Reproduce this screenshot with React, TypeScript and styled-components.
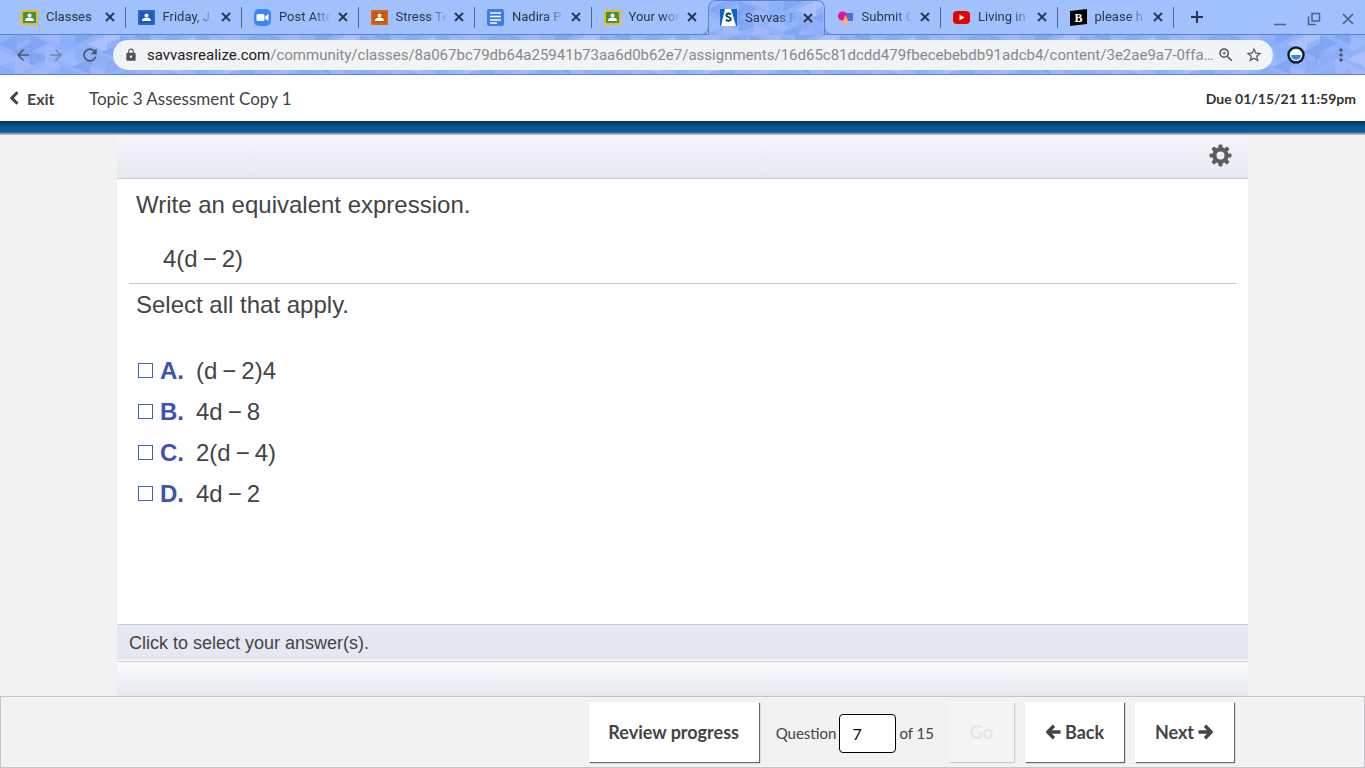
import React, { useState } from "react";
import styled, { createGlobalStyle, css } from "styled-components";
import { MdArrowBack, MdArrowForward, MdRefresh, MdLock, MdOutlineZoomIn, MdStarBorder, MdMoreVert } from "react-icons/md";

const GlobalStyle = createGlobalStyle`
  *, *::before, *::after { box-sizing: border-box; }
  body { margin: 0; background: #f2f2f2; }
  button { font: inherit; color: inherit; border: 0; padding: 0; background: none; }
`;

const Page = styled.div`
  display: flex;
  flex-direction: column;
  min-height: 100vh;
  color: #444;
  font-family: "Liberation Sans", sans-serif;
`;

/* Browser frame */
const TabStrip = styled.header`
  display: flex;
  height: 35px;
  padding-left: 9px;
  background: #a1c1fd;
  border-bottom: 1px solid #5c83d0;
  font: 13px/18px Roboto, sans-serif;
  color: #26364f;
`;

const Tabs = styled.nav`
  display: grid;
  grid-template-columns: repeat(10, minmax(0, 1fr));
  flex: 0 1 1165px;
  min-width: 0;
`;

const Tab = styled.div<{ $active?: boolean; $divider?: boolean }>`
  position: relative;
  display: flex;
  align-items: center;
  padding: 0 8px 0 12px;
  &::after {
    content: "";
    position: absolute;
    right: 0;
    top: 7px;
    width: 1px;
    height: 21px;
    background: ${(p) => (p.$divider ? "#51678f" : "transparent")};
  }
  ${(p) =>
    p.$active &&
    css`
      margin-bottom: -1px;
      border: 1px solid #5c83d0;
      border-bottom: 0;
      border-radius: 8px 8px 0 0;
      padding: 0 8px 1px 11px;
    `}
`;

const Flare = styled.span<{ $side: "left" | "right" }>`
  position: absolute;
  bottom: 0;
  ${(p) => p.$side}: -8px;
  width: 8px;
  height: 8px;
  border-bottom: 1px solid #5c83d0;
  border-${(p) => (p.$side === "left" ? "right" : "left")}: 1px solid #5c83d0;
  border-bottom-${(p) => (p.$side === "left" ? "right" : "left")}-radius: 8px;
`;

const Favicon = styled.svg`
  position: relative;
  flex: none;
  width: 17px;
  height: 17px;
  margin-right: 8px;
`;

const TabTitle = styled.span`
  position: relative;
  flex: 1;
  min-width: 0;
  white-space: nowrap;
  mask-image: linear-gradient(to right, #000 calc(100% - 18px), transparent);
`;

const WholeTitle = styled(TabTitle)`
  mask-image: none;
`;

const CloseButton = styled.button`
  position: relative;
  display: grid;
  place-items: center;
  flex: none;
  width: 16px;
  height: 16px;
  margin-left: 4px;
`;

const NewTab = styled.button`
  align-self: center;
  display: grid;
  place-items: center;
  width: 24px;
  height: 24px;
  margin-left: 11px;
`;

const WindowControls = styled.div`
  display: flex;
  align-items: center;
  gap: 20px;
  margin-left: auto;
  padding: 4px 10px 0 0;
  color: #4c5f85;
`;

const ControlButton = styled.button`
  display: grid;
`;

const Toolbar = styled.div`
  position: relative;
  display: flex;
  align-items: center;
  height: 40px;
  padding: 0 14px;
  border-bottom: 1px solid #5c83d0;
  font: 15px/20px Roboto, sans-serif;
  color: #4c5568;
`;

const Backdrop = styled.svg`
  position: absolute;
  inset: 0;
  width: 100%;
  height: 100%;
  border-radius: inherit;
`;

const ToolButton = styled.button<{ $dim?: boolean }>`
  position: relative;
  display: grid;
  flex: none;
  width: 18px;
  margin-right: 15px;
  opacity: ${(p) => (p.$dim ? 0.5 : 1)};
`;

const AddressBar = styled.div`
  position: relative;
  display: flex;
  align-items: center;
  flex: 1;
  min-width: 0;
  height: 30px;
  padding: 0 10px 0 11px;
  border-radius: 15px;
  background: #f1f3f4;
  color: #50545a;
`;

const Address = styled.div`
  flex: 1;
  min-width: 0;
  margin-left: 9px;
  overflow: hidden;
  white-space: nowrap;
  text-overflow: ellipsis;
  color: #85898e;
`;

const Host = styled.span`
  color: #202124;
`;

const BarButton = styled.button`
  display: grid;
  flex: none;
  & + & { margin-left: 10px; }
`;

const Extension = styled.button`
  position: relative;
  display: grid;
  flex: none;
  margin: 0 11px 0 14px;
`;

const Rule = styled.span`
  position: relative;
  width: 1px;
  height: 17px;
  margin-right: 14px;
  background: #7e9fe0;
`;

const MenuButton = styled.button`
  position: relative;
  display: grid;
  flex: none;
`;

/* Course header */
const CourseBar = styled.header`
  display: flex;
  align-items: center;
  height: 46px;
  padding: 0 9px;
  background: #fff;
  font-family: Lato, sans-serif;
`;

const ExitLink = styled.a`
  display: flex;
  align-items: center;
  gap: 7px;
  width: 80px;
  color: #444;
  font-size: 16px;
  font-weight: 700;
  text-decoration: none;
`;

const CourseTitle = styled.h1`
  margin: 0;
  font-size: 17px;
  font-weight: 400;
`;

const Due = styled.span`
  margin-left: auto;
  font-size: 14px;
  font-weight: 700;
  color: #333;
`;

const BlueBand = styled.div`
  height: 14px;
  background: linear-gradient(#07365c, #045490 5px, #0560a0 11px, #6f7f8d 12px, #cfcfcf 14px);
`;

/* Question */
const Player = styled.main`
  display: flex;
  flex-direction: column;
  flex: 1;
  margin: 0 117px;
  background: #fff;
`;

const PlayerBar = styled.div`
  display: flex;
  align-items: center;
  justify-content: flex-end;
  height: 44px;
  padding: 0 16px 2px;
  background: linear-gradient(#f6f6fa, #e6e8f1);
  border-bottom: 1px solid #c7cada;
`;

const IconButton = styled.button`
  display: grid;
  color: #5c5c5c;
`;

const Question = styled.section`
  flex: 1;
  padding: 0 12px;
  font-size: 24px;
  line-height: 28px;
`;

const Prompt = styled.p`
  margin: 0;
  padding: 12px 7px;
`;

const Formula = styled.p`
  margin: 0;
  padding: 14px 34px 10px;
  border-bottom: 1px solid #c8c8c8;
`;

const Minus = styled.span`
  margin: 0 5px;
`;

const Choices = styled.fieldset`
  margin: 0;
  padding: 0 9px;
  border: 0;
`;

const ChoiceLegend = styled.legend`
  margin-left: -2px;
  padding: 7px 0 31px;
`;

const Choice = styled.label`
  display: flex;
  align-items: center;
  height: 41px;
`;

const Check = styled.input`
  appearance: none;
  width: 15px;
  height: 15px;
  margin: 0 7px 0 0;
  border: 1px solid #4562ad;
  background: #fff;
  &:checked { background: #4562ad; }
`;

const Letter = styled.b`
  width: 36px;
  color: #3f51b5;
`;

const Hint = styled.p`
  margin: 0;
  height: 37px;
  padding: 0 12px;
  border-top: 1px solid #c7cada;
  border-bottom: 1px solid #fff;
  background: #e5e8f1;
  font-size: 18px;
  line-height: 36px;
`;

const LowerBar = styled.div`
  height: 35px;
  border-top: 1px solid #c7cada;
  background: linear-gradient(#fbfbfd, #e6e8f1);
`;

const Footer = styled.footer`
  display: flex;
  align-items: center;
  justify-content: flex-end;
  height: 72px;
  padding-right: 130px;
  border: 1px solid #c4c4c8;
  background: #f2f2f2;
  font: 15px/20px Lato, sans-serif;
`;

const NavButton = styled.button<{ $wide?: boolean }>`
  display: flex;
  align-items: center;
  justify-content: center;
  gap: 4px;
  width: ${(p) => (p.$wide ? 170 : 99)}px;
  height: 60px;
  margin-left: ${(p) => (p.$wide ? 0 : 11)}px;
  background: #fff;
  box-shadow: 1px 1px 1px #666;
  font: 700 18px/20px Lato, sans-serif;
  color: #444;
  &:disabled {
    width: 65px;
    margin-left: 15px;
    background: #f5f5f5;
    box-shadow: 1px 1px 1px #ccc;
    color: #e6e6e6;
  }
`;

const Jump = styled.label`
  display: flex;
  align-items: center;
  gap: 3px;
  margin-left: 17px;
  padding-top: 2px;
`;

const NumberBox = styled.input`
  width: 57px;
  height: 39px;
  padding: 0 12px;
  border: 1px solid #000;
  border-radius: 4px;
  background: #fff;
  color: #000;
  font: 16px/20px Lato, sans-serif;
`;

/* Faceted triangle wallpaper for the themed browser frame */
const facetColors = ["#7ba2f2", "#8cacf5", "#9ebcfc", "#a9b8fa", "#86b0f8", "#b4c5fc", "#86a9f5"];
const facets = Array.from({ length: 64 }, (_, i) => {
  const col = i % 16;
  const row = Math.floor(i / 16);
  const x = col * 15;
  const y = row * 15 - (col % 2) * 7;
  const color = facetColors[(i * 5 + row * 3 + ((i * i) % 11)) % facetColors.length];
  const right = (i * 7 + row) % 3 !== 0;
  return { color, points: right ? `${x},${y} ${x + 19},${y + 8} ${x},${y + 17}` : `${x + 17},${y} ${x - 3},${y + 9} ${x + 17},${y + 17}` };
});

function Wallpaper({ id }: { id: string }) {
  return (
    <Backdrop aria-hidden="true">
      <defs>
        <pattern id={id} width="240" height="60" patternUnits="userSpaceOnUse">
          <rect width="240" height="60" fill="#92b3fa" />
          {facets.map((f, i) => (
            <polygon key={i} points={f.points} fill={f.color} opacity="0.7" />
          ))}
        </pattern>
      </defs>
      <rect width="100%" height="100%" fill={`url(#${id})`} />
    </Backdrop>
  );
}

type IconKind = "classGreen" | "classBlue" | "classOrange" | "zoom" | "docs" | "savvas" | "submit" | "youtube" | "brainly";

const classroom: Partial<Record<IconKind, [string, string]>> = {
  classGreen: ["#e9b92c", "#43923f"],
  classBlue: ["#2a66ca", "#1b57bd"],
  classOrange: ["#d9640f", "#c9570a"],
};

function TabIcon({ kind }: { kind: IconKind }) {
  const board = classroom[kind];
  return (
    <Favicon viewBox="0 0 17 17" aria-hidden="true">
      {board && (
        <>
          <rect y="1" width="17" height="15" rx="1" fill={board[0]} />
          <rect x="2" y="3" width="13" height="11" fill={board[1]} />
          <circle cx="8.5" cy="6.4" r="2" fill="#fff" />
          <path d="M4 12c0-3 2.400-3.200 4.500-3.200S13 9 13 12z" fill="#fff" />
        </>
      )}
      {kind === "zoom" && (
        <>
          <rect width="17" height="17" rx="5" fill="#3d86f5" />
          <rect x="2.500" y="5" width="8" height="7" rx="1.500" fill="#fff" />
          <path d="M11.200 7.500 14.500 5v7l-3.300-2.500z" fill="#fff" />
        </>
      )}
      {kind === "docs" && (
        <>
          <rect width="17" height="17" rx="2" fill="#3c7cec" />
          <path d="M3 4h11M3 7.500h11M3 11h11M3 14h7" stroke="#fff" strokeWidth="1.700" />
        </>
      )}
      {kind === "savvas" && (
        <>
          <rect width="17" height="17" fill="#0f66c0" />
          <path d="M5 0h6l5 17H1z" fill="#fff" />
          <path d="M11 5.200C9.500 4 6.200 4.300 6.400 6.500c.2 2 4.500 1.300 4.500 3.500 0 2-3.200 2.200-5 .9" fill="none" stroke="#123f78" strokeWidth="2" />
        </>
      )}
      {kind === "submit" && (
        <>
          <rect x="8" y="4" width="8" height="8" fill="#586bd0" />
          <circle cx="5.500" cy="7" r="4.500" fill="#e3148f" />
          <path d="m8.500 6 4 9h-8z" fill="#fbab74" />
        </>
      )}
      {kind === "youtube" && (
        <>
          <rect y="2" width="17" height="13" rx="4" fill="#e60000" />
          <path d="m6.500 5.500 5 3-5 3z" fill="#fff" />
        </>
      )}
      {kind === "brainly" && (
        <>
          <path d="M0 2 17 0v15L0 17z" fill="#000" />
          <text x="4.500" y="12.500" fontFamily="Liberation Serif, serif" fontSize="12" fontWeight="700" fill="#fff">B</text>
        </>
      )}
    </Favicon>
  );
}

const tabs: { title: string; icon: IconKind; whole?: boolean; active?: boolean; divider?: boolean }[] = [
  { title: "Classes", icon: "classGreen", whole: true, divider: true },
  { title: "Friday, J", icon: "classBlue", divider: true },
  { title: "Post Atte", icon: "zoom", divider: true },
  { title: "Stress Te", icon: "classOrange", divider: true },
  { title: "Nadira P", icon: "docs", divider: true },
  { title: "Your wor", icon: "classGreen" },
  { title: "Savvas R", icon: "savvas", active: true },
  { title: "Submit C", icon: "submit", divider: true },
  { title: "Living in", icon: "youtube", divider: true },
  { title: "please h", icon: "brainly", divider: true },
];

function Browser() {
  return (
    <>
      <TabStrip>
        <Tabs aria-label="Open tabs">
          {tabs.map((t) => {
            const Title = t.whole ? WholeTitle : TabTitle;
            return (
              <Tab key={t.title} $active={t.active} $divider={t.divider}>
                {t.active && (
                  <>
                    <Wallpaper id="tab-facets" />
                    <Flare $side="left" />
                    <Flare $side="right" />
                  </>
                )}
                <TabIcon kind={t.icon} />
                <Title>{t.title}</Title>
                <CloseButton aria-label={`Close ${t.title}`}>
                  <svg width="10" height="10" viewBox="0 0 10 10" stroke="currentColor" strokeWidth="1.800">
                    <path d="m1 1 8 8M9 1 1 9" />
                  </svg>
                </CloseButton>
              </Tab>
            );
          })}
        </Tabs>
        <NewTab aria-label="New tab">
          <svg width="14" height="14" viewBox="0 0 14 14" stroke="currentColor" strokeWidth="2">
            <path d="M7 1v12M1 7h12" />
          </svg>
        </NewTab>
        <WindowControls>
          <ControlButton aria-label="Minimize">
            <svg width="14" height="14" viewBox="0 0 14 14" stroke="currentColor" strokeWidth="1.500">
              <path d="M1 12.500h12" />
            </svg>
          </ControlButton>
          <ControlButton aria-label="Restore">
            <svg width="14" height="14" viewBox="0 0 14 14" fill="none" stroke="currentColor" strokeWidth="1.500">
              <path d="M5 1.500h7.500V9H5zM1.500 4.500v8H9" />
            </svg>
          </ControlButton>
          <ControlButton aria-label="Close window">
            <svg width="14" height="14" viewBox="0 0 14 14" stroke="currentColor" strokeWidth="1.700">
              <path d="m2 2 10 10M12 2 2 12" />
            </svg>
          </ControlButton>
        </WindowControls>
      </TabStrip>
      <Toolbar>
        <Wallpaper id="toolbar-facets" />
        <ToolButton aria-label="Back"><MdArrowBack size={18} /></ToolButton>
        <ToolButton aria-label="Forward" $dim><MdArrowForward size={18} /></ToolButton>
        <ToolButton aria-label="Reload"><MdRefresh size={20} /></ToolButton>
        <AddressBar>
          <MdLock size={14} />
          <Address role="textbox" aria-label="Address">
            <Host>savvasrealize.com</Host>
            /community/classes/8a067bc79db64a25941b73aa6d0b62e7/assignments/16d65c81dcdd479fbecebebdb91adcb4/content/3e2ae9a7-0ffa…
          </Address>
          <BarButton aria-label="Zoom"><MdOutlineZoomIn size={18} /></BarButton>
          <BarButton aria-label="Bookmark"><MdStarBorder size={18} /></BarButton>
        </AddressBar>
        <Extension aria-label="Extension">
          <svg width="18" height="18" viewBox="0 0 18 18">
            <circle cx="9" cy="9" r="7.500" fill="#fff" stroke="#0b2038" strokeWidth="2.500" />
            <path d="M4 9h10a5 5 0 0 1-10 0z" fill="#2f8fe6" />
          </svg>
        </Extension>
        <Rule />
        <MenuButton aria-label="Menu"><MdMoreVert size={20} /></MenuButton>
      </Toolbar>
    </>
  );
}

function Gear() {
  return (
    <svg width="23" height="23" viewBox="0 0 24 24" aria-hidden="true">
      <circle cx="12" cy="12" r="6.400" fill="none" stroke="currentColor" strokeWidth="4.400" />
      {[0, 45, 90, 135, 180, 225, 270, 315].map((a) => (
        <rect key={a} x="9.900" y="0.500" width="4.200" height="4.500" rx="1.200" fill="currentColor" transform={`rotate(${a} 12 12)`} />
      ))}
    </svg>
  );
}

function Chevron() {
  return (
    <svg width="11" height="14" viewBox="0 0 11 14" fill="none" stroke="currentColor" strokeWidth="3" aria-hidden="true">
      <path d="M8.500 1.300 2.800 7l5.700 5.700" />
    </svg>
  );
}

function Arrow({ to }: { to: "left" | "right" }) {
  return (
    <svg width="16" height="16" viewBox="0 0 16 16" fill="none" stroke="currentColor" strokeWidth="3.400" aria-hidden="true">
      <path d={to === "left" ? "M9 1.800 2.800 8 9 14.200M3.500 8h12" : "M7 1.800 13.200 8 7 14.200M12.500 8H.5"} strokeLinejoin="round" />
    </svg>
  );
}

const choices = [
  { letter: "A", left: "(d", right: "2)4" },
  { letter: "B", left: "4d", right: "8" },
  { letter: "C", left: "2(d", right: "4)" },
  { letter: "D", left: "4d", right: "2" },
];

export default function App() {
  const [question, setQuestion] = useState("7");
  return (
    <Page>
      <GlobalStyle />
      <Browser />
      <CourseBar>
        <ExitLink href="#exit"><Chevron />Exit</ExitLink>
        <CourseTitle>Topic 3 Assessment Copy 1</CourseTitle>
        <Due>Due 01/15/21 11:59pm</Due>
      </CourseBar>
      <BlueBand />
      <Player>
        <PlayerBar>
          <IconButton aria-label="Settings"><Gear /></IconButton>
        </PlayerBar>
        <Question>
          <Prompt>Write an equivalent expression.</Prompt>
          <Formula>4(d<Minus>−</Minus>2)</Formula>
          <Choices>
            <ChoiceLegend>Select all that apply.</ChoiceLegend>
            {choices.map((c) => (
              <Choice key={c.letter}>
                <Check type="checkbox" />
                <Letter>{c.letter}.</Letter>
                <span>{c.left}<Minus>−</Minus>{c.right}</span>
              </Choice>
            ))}
          </Choices>
        </Question>
        <Hint>Click to select your answer(s).</Hint>
        <LowerBar />
      </Player>
      <Footer>
        <NavButton $wide>Review progress</NavButton>
        <Jump>
          Question
          <NumberBox value={question} onChange={(e) => setQuestion(e.target.value)} />
          of 15
        </Jump>
        <NavButton disabled>Go</NavButton>
        <NavButton><Arrow to="left" />Back</NavButton>
        <NavButton>Next<Arrow to="right" /></NavButton>
      </Footer>
    </Page>
  );
}
